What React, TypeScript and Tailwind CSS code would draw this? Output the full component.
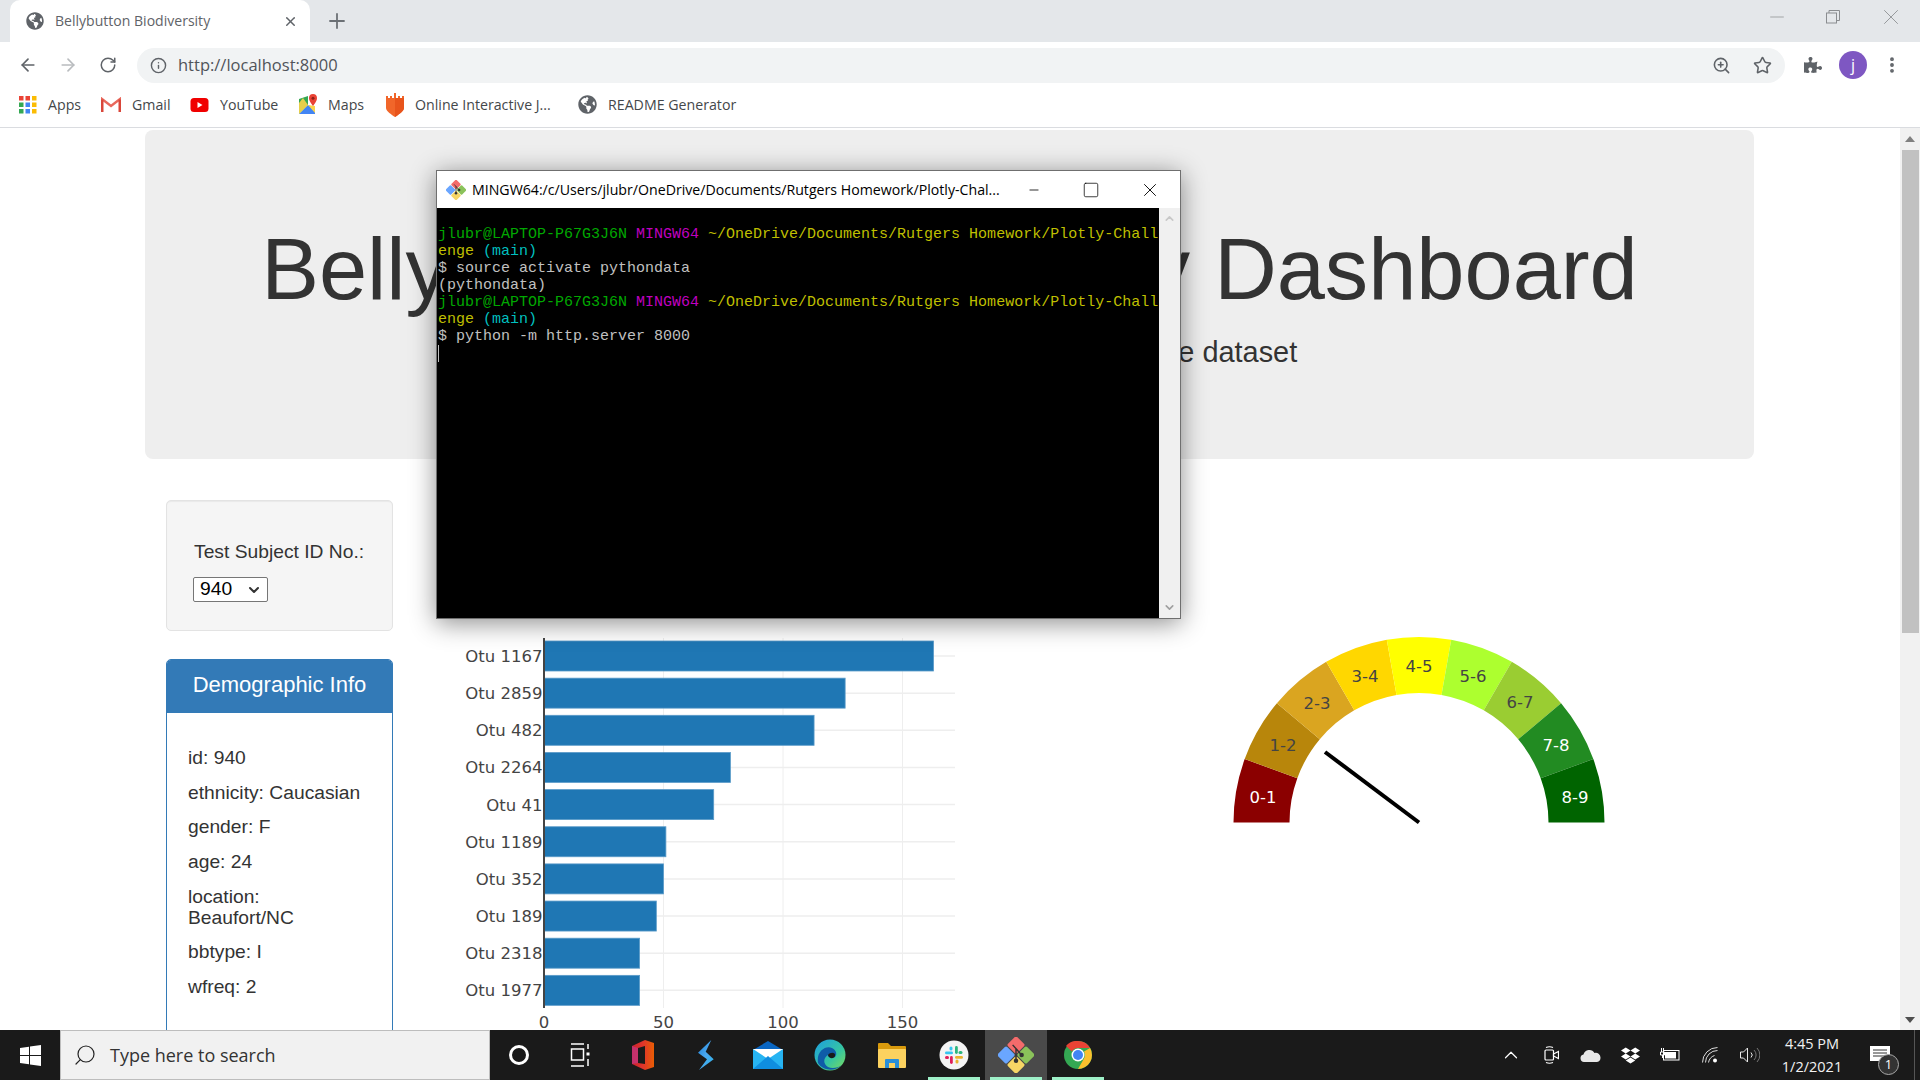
import React from "react";
import { ArrowLeft, ArrowRight, RotateCw, Info, ZoomIn, Star, EllipsisVertical, Plus, X, Search, Minus, Square, ChevronUp, ChevronDown } from "lucide-react";
import { FaGlobeAmericas, FaPuzzlePiece, FaDropbox } from "react-icons/fa";

const bars: [string, number][] = [
  ["Otu 1167", 163], ["Otu 2859", 126], ["Otu 482", 113], ["Otu 2264", 78], ["Otu 41", 71],
  ["Otu 1189", 51], ["Otu 352", 50], ["Otu 189", 47], ["Otu 2318", 40], ["Otu 1977", 40],
];

function BarChart() {
  const x0 = 104;
  const u = 2.39;
  const p = 37.15;
  return (
    <svg width="540" height="416" className="block shrink-0" style={{ fontFamily: "'DejaVu Sans', sans-serif" }}>
      {[50, 100, 150].map((t) => (
        <line key={t} x1={x0 + t * u} x2={x0 + t * u} y1="18" y2="388" stroke="#eeeeee" strokeWidth="1" />
      ))}
      {bars.map(([n, v], i) => (
        <g key={n}>
          <line x1={x0} x2="515" y1={36 + i * p} y2={36 + i * p} stroke="#eeeeee" strokeWidth="1.5" />
          <rect x={x0} y={21 + i * p} width={v * u} height="30" fill="#1f77b4" stroke="#5b9bc9" strokeWidth="0.8" />
          <text x="102.5" y={42 + i * p} textAnchor="end" fontSize="16.5" fill="#444444">{n}</text>
        </g>
      ))}
      <line x1={x0} x2={x0} y1="18" y2="388" stroke="#444444" strokeWidth="2" />
      {[0, 50, 100, 150].map((t) => (
        <text key={t} x={x0 + t * u} y="408" textAnchor="middle" fontSize="16.5" fill="#444444">{t}</text>
      ))}
    </svg>
  );
}

const gaugeColors = ["#8b0000", "#b8860b", "#daa520", "#ffd700", "#ffff00", "#adff2f", "#9acd32", "#228b22", "#006400"];
const gaugeLabels: [string, number, number, string][] = [
  ["0-1", 43, 177, "#fff"], ["1-2", 63, 125, "#444"], ["2-3", 97, 83, "#444"], ["3-4", 145, 56, "#444"], ["4-5", 199, 46, "#444"],
  ["5-6", 253, 56, "#444"], ["6-7", 300, 82, "#444"], ["7-8", 336, 125, "#fff"], ["8-9", 355, 177, "#fff"],
];

function Gauge() {
  const cx = 199, cy = 202.5, R = 185.5, r = 129.5;
  const pt = (rad: number, a: number) => `${cx - rad * Math.cos(a)} ${cy - rad * Math.sin(a)}`;
  return (
    <svg width="400" height="220" className="block shrink-0" style={{ fontFamily: "'DejaVu Sans', sans-serif" }}>
      {gaugeColors.map((c, i) => {
        const a = (i * Math.PI) / 9, b = ((i + 1) * Math.PI) / 9;
        return <path key={c} fill={c} d={`M${pt(r, a)} L${pt(R, a)} A${R} ${R} 0 0 1 ${pt(R, b)} L${pt(r, b)} A${r} ${r} 0 0 0 ${pt(r, a)} Z`} />;
      })}
      {gaugeLabels.map(([t, x, y, c]) => (
        <text key={t} x={x} y={y + 6} textAnchor="middle" fontSize="16.5" fill={c}>{t}</text>
      ))}
      <line x1="199" y1="202.500" x2="105" y2="132" stroke="#000" strokeWidth="4" />
    </svg>
  );
}

function AppsIcon() {
  const c = ["#ea4335", "#ea4335", "#fbbc04", "#34a853", "#4285f4", "#fbbc04", "#34a853", "#4285f4", "#fbbc04"];
  return (
    <svg width="18" height="18" viewBox="0 0 18 18">
      {c.map((f, i) => <rect key={i} x={(i % 3) * 6.5} y={Math.floor(i / 3) * 6.5} width="4.5" height="4.5" fill={f} />)}
    </svg>
  );
}
function GmailIcon() {
  return (
    <svg width="20" height="16" viewBox="0 0 20 16">
      <path d="M1 15V2l9 7 9-7v13" fill="none" stroke="#e8685c" strokeWidth="2.4" />
      <path d="M1.2 15V2.5M18.8 15V2.5" stroke="#d9463a" strokeWidth="2.4" />
    </svg>
  );
}
function YoutubeIcon() {
  return (
    <svg width="19" height="18" viewBox="0 0 19 18">
      <rect x="0.5" y="2" width="18" height="14" rx="3.5" fill="#f00000" />
      <path d="M7.5 6l5 3-5 3z" fill="#fff" />
    </svg>
  );
}
function MapsIcon() {
  return (
    <svg width="18" height="22" viewBox="0 0 18 22">
      <path d="M0 5l9-3 0 9-9 9z" fill="#34a853" />
      <path d="M0 20l9-9 7 9z" fill="#4285f4" />
      <path d="M2 20l8-9 6 7 0 2z" fill="#4285f4" />
      <path d="M4 4l5 7-9 9V9z" fill="#fbd34a" opacity=".9" />
      <path d="M9 11l7 8v-7z" fill="#fbd34a" />
      <path d="M14 0a4.2 4.2 0 0 1 4 4.3c0 3-4 7.7-4 7.7s-4-4.700-4-7.700A4.200 4.200 0 0 1 14 0z" fill="#ea4335" />
      <circle cx="14" cy="4.300" r="1.500" fill="#8f1f17" />
    </svg>
  );
}
function JsIcon() {
  return (
    <svg width="18" height="24" viewBox="0 0 18 24">
      <path d="M0 3h2v2h2V3h2v2h2V0h2v5h2V3h2v2h2V3h2v12c0 3-6 7-9 9-3-2-9-6-9-9z" fill="#f1662a" />
      <path d="M9 5h9v10c0 3-6 7-9 9z" fill="#e8541c" />
    </svg>
  );
}
function Globe({ size = 19 }: { size?: number }) {
  return <FaGlobeAmericas size={size} color="#5f6368" />;
}
function GitIcon({ size = 18 }: { size?: number }) {
  return (
    <svg width={size} height={size} viewBox="0 0 32 32">
      <g transform="rotate(45 16 16)">
        <rect x="4" y="4" width="11.500" height="11.500" rx="1.500" fill="#f46b6b" />
        <rect x="16.500" y="4" width="11.500" height="11.500" rx="1.500" fill="#8ac25a" />
        <rect x="4" y="16.500" width="11.500" height="11.500" rx="1.500" fill="#6aa6ff" />
        <rect x="16.500" y="16.500" width="11.500" height="11.500" rx="1.500" fill="#f7d665" />
      </g>
      <circle cx="16" cy="21" r="2" fill="#333" />
      <circle cx="21" cy="16" r="2" fill="#333" />
      <path d="M16 10v11M13 7l8 9" stroke="#333" strokeWidth="1.300" />
    </svg>
  );
}

const bookmarks: [React.ReactNode, string, string, string][] = [
  [<AppsIcon />, "Apps", "ml-[11px]", "w-[33px]"],
  [<GmailIcon />, "Gmail", "ml-[20px]", "w-[37px]"],
  [<YoutubeIcon />, "YouTube", "ml-[21px]", "w-[57px]"],
  [<MapsIcon />, "Maps", "ml-[22px]", "w-[36px]"],
  [<JsIcon />, "Online Interactive J...", "ml-[22px]", "w-[138px]"],
  [<Globe />, "README Generator", "ml-[25px]", "w-[128px]"],
];

function ChromeBar() {
  return (
    <div className="shrink-0 [font-family:'Open_Sans',sans-serif] bg-white">
      <div className="h-[42px] bg-[#e4e7ea] flex items-center relative">
        <div className="ml-[10px] w-[300px] h-[42px] bg-white rounded-t-[10px] flex items-center pl-[16px] pr-[12px]">
          <Globe size={18} />
          <span className="ml-[11px] text-[14.05px] text-[#5f6368] flex-1 whitespace-nowrap">Bellybutton Biodiversity</span>
          <X size={15} strokeWidth={2.4} color="#5f6368" />
        </div>
        <Plus size={24} strokeWidth={1.8} color="#6b7075" className="ml-[15px]" />
        <div className="ml-auto flex items-center h-full text-[#8a8d90]">
          <Minus size={22} strokeWidth={0.8} className="mr-[38px] -translate-y-[4px]" />
          <svg width="14" height="14" viewBox="0 0 14 14" fill="none" stroke="#8a8d90" className="mr-[38px] -translate-y-[4px]">
            <rect x="0.5" y="3" width="10" height="10" />
            <path d="M3 3V0.500h10.500v10H10.500" />
          </svg>
          <X size={26} strokeWidth={0.8} className="mr-[16px] -translate-y-[4px]" />
        </div>
      </div>
      <div className="h-[41px] flex items-center pt-[5px]">
        <ArrowLeft size={20} color="#5f6368" className="ml-[18px]" />
        <ArrowRight size={20} color="#b9bcbf" className="ml-[20px]" />
        <RotateCw size={18} color="#5f6368" className="ml-[21px]" />
        <div className="ml-[20px] w-[1648px] h-[35px] bg-[#f1f3f4] rounded-full flex items-center pl-[13px] pr-[13px]">
          <Info size={17} color="#5f6368" />
          <span className="ml-[11px] text-[16.5px] text-[#50545a] flex-1">http://localhost:8000</span>
          <ZoomIn size={19} color="#5f6368" className="mr-[22px]" />
          <Star size={19} color="#5f6368" />
        </div>
        <FaPuzzlePiece size={18} color="#5f6368" className="ml-[19px]" />
        <div className="ml-[17px] w-[28px] h-[28px] rounded-full bg-[#7e57c2] text-white text-[16px] flex items-center justify-center">j</div>
        <EllipsisVertical size={20} strokeWidth={2.6} color="#5f6368" className="ml-[15px]" />
      </div>
      <div className="h-[44px] flex items-center pl-[8px] border-b border-[#dadce0] text-[14.2px] text-[#44474a] box-content">
        {bookmarks.map(([icon, label, ml, w]) => (
          <div key={label} className={`flex items-center ${ml}`}>
            {icon}
            <span className={`ml-[11px] whitespace-nowrap ${w}`}>{label}</span>
          </div>
        ))}
      </div>
    </div>
  );
}

function Terminal() {
  const prompt = (
    <>
      <span className="text-[#00a800]">jlubr@LAPTOP-P67G3J6N</span>{" "}
      <span className="text-[#bf00bf]">MINGW64</span>{" "}
      <span className="text-[#bfbf00]">~/OneDrive/Documents/Rutgers Homework/Plotly-Chall</span>
      {"\n"}
      <span className="text-[#bfbf00]">enge</span>{" "}
      <span className="text-[#00bfbf]">(main)</span>
      {"\n"}
    </>
  );
  return (
    <div className="absolute left-[436px] top-[42px] w-[745px] h-[449px] bg-white border border-[#6f6f6f] shadow-[0_4px_24px_rgba(0,0,0,0.45)] flex flex-col">
      <div className="h-[37px] shrink-0 flex items-center [font-family:'Open_Sans',sans-serif] text-[14.17px] text-black">
        <div className="ml-[9px]"><GitIcon size={20} /></div>
        <span className="ml-[6px] w-[530px] whitespace-nowrap">MINGW64:/c/Users/jlubr/OneDrive/Documents/Rutgers Homework/Plotly-Chal...</span>
        <Minus size={14} strokeWidth={1.4} className="ml-[25px]" />
        <Square size={18} strokeWidth={1} className="ml-[41px]" />
        <X size={22} strokeWidth={1} className="ml-[39px]" />
      </div>
      <div className="flex-1 flex min-h-0">
        <pre className="w-[722px] bg-black pt-[18px] pl-[1px] [font-family:'Liberation_Mono',monospace] text-[15px] leading-[17px] text-[#c0c0c0] overflow-hidden">
          {prompt}
          {"$ source activate pythondata\n(pythondata)\n"}
          {prompt}
          {"$ python -m http.server 8000\n"}
          <span className="inline-block w-[1px] h-[17px] bg-[#c0c0c0]" />
        </pre>
        <div className="flex-1 bg-[#f0f0f0] flex flex-col items-center justify-between py-[4px]">
          <ChevronUp size={13} color="#c8c8c8" strokeWidth={3} />
          <ChevronDown size={13} color="#a0a0a0" strokeWidth={3} />
        </div>
      </div>
    </div>
  );
}

function Page() {
  const demo = ["id: 940", "ethnicity: Caucasian", "gender: F", "age: 24", "location: Beaufort/NC", "bbtype: I", "wfreq: 2"];
  return (
    <div className="flex-1 min-h-0 flex bg-white relative">
      <div className="flex-1 overflow-hidden [font-family:'Liberation_Sans',sans-serif] text-[#333333]">
        <div className="ml-[145px] w-[1609px] mt-[2px] h-[329px] bg-[#eeeeee] rounded-[8px] flex flex-col items-center pt-[93px]">
          <h1 className="text-[86.6px] leading-[92px] font-normal whitespace-nowrap">Belly Button Biodiversity Dashboard</h1>
          <p className="text-[28.9px] leading-[40px] mt-[17px]">Use the interactive charts below to explore the dataset</p>
        </div>
        <div className="flex ml-[166px] mt-[41px]">
          <div className="w-[227px] shrink-0">
            <div className="h-[131px] bg-[#f5f5f5] border border-[#e3e3e3] rounded-[5px] pl-[26px] pt-[39px] shadow-[inset_0_1px_1px_rgba(0,0,0,0.05)]">
              <div className="text-[19.25px] leading-[24px] ml-[1px]">Test Subject ID No.:</div>
              <div className="mt-[13px] w-[75px] h-[25px] bg-white border border-[#767676] rounded-[2px] flex items-center pl-[6px] text-[19.25px] text-black">
                <span className="flex-1">940</span>
                <ChevronDown size={16} strokeWidth={3} className="mr-[5px]" color="#333" />
              </div>
            </div>
            <div className="mt-[28px] h-[400px] border border-[#337ab7] rounded-[5px] bg-white">
              <div className="h-[53px] pb-[4px] bg-[#337ab7] text-white text-[22px] flex items-center justify-center rounded-t-[4px]">Demographic Info</div>
              <div className="pl-[21px] pr-[30px] pt-[34px] text-[19.25px] leading-[21px]">
                {demo.map((d) => (
                  <div key={d} className="mb-[13.7px]">{d}</div>
                ))}
              </div>
            </div>
          </div>
          <div className="ml-[47px] mt-[120px]"><BarChart /></div>
          <div className="ml-[240px] mt-[120px]"><Gauge /></div>
        </div>
      </div>
      <div className="w-[20px] shrink-0 bg-[#f1f1f1] flex flex-col items-center relative">
        <div className="h-[22px] flex items-center justify-center">
          <svg width="10" height="6" viewBox="0 0 10 6"><path d="M5 0l5 6H0z" fill="#808080" /></svg>
        </div>
        <div className="w-[17px] h-[483px] bg-[#c1c1c1]" />
        <div className="mt-auto h-[20px] flex items-center justify-center">
          <svg width="10" height="6" viewBox="0 0 10 6"><path d="M5 6l5-6H0z" fill="#505050" /></svg>
        </div>
      </div>
      <Terminal />
    </div>
  );
}

function TaskIcon({ children, w = 62, active, under }: { children: React.ReactNode; w?: number; active?: boolean; under?: boolean }) {
  return (
    <div className={`relative h-full flex items-center justify-center shrink-0 ${active ? "bg-[#4a4a4a]" : ""}`} style={{ width: w }}>
      {children}
      {under && <div className="absolute bottom-0 left-[5px] right-[5px] h-[3px] bg-[#9ef0c8]" />}
    </div>
  );
}

function Taskbar() {
  return (
    <div className="h-[50px] shrink-0 bg-[#1a1a1a] flex items-center [font-family:'Open_Sans',sans-serif] text-white">
      <div className="w-[60px] flex justify-center">
        <svg width="21" height="21" viewBox="0 0 21 21" fill="#fff">
          <path d="M0 3l9-1.300V10H0zM10 1.500L21 0v10H10zM0 11h9v8.300L0 18zM10 11h11v10l-11-1.500z" />
        </svg>
      </div>
      <div className="w-[430px] h-full bg-[#f1f1f1] border border-[#bdbdbd] flex items-center text-[#333]">
        <Search size={24} strokeWidth={1.2} color="#222" className="ml-[12px] -scale-x-100" />
        <span className="ml-[13px] text-[18px]">Type here to search</span>
      </div>
      <div className="flex items-center h-full ml-[-1px]">
        <TaskIcon w={62}>
          <div className="ml-[-2px] w-[20px] h-[20px] rounded-full border-[3px] border-white" />
        </TaskIcon>
        <TaskIcon w={62}>
          <svg width="20" height="24" viewBox="0 0 20 24" fill="none" stroke="#fff" strokeWidth="1.500" className="ml-[-4px]">
            <path d="M1 1h13M1 23h13" /><rect x="1.500" y="6" width="12" height="11" /><path d="M18 1v5M18 16v7" /><rect x="16.500" y="9.500" width="3" height="3" fill="#fff" stroke="none" />
          </svg>
        </TaskIcon>
        <TaskIcon w={62}>
          <svg width="22" height="32" viewBox="0 0 22 32" className="ml-[-2px]">
            <defs>
              <linearGradient id="off" x1="0" y1="0" x2="1" y2="0"><stop offset="0" stopColor="#c8202c" /><stop offset="0.5" stopColor="#e0352b" /><stop offset="1" stopColor="#e85d04" /></linearGradient>
            </defs>
            <path d="M0 7L13 1l9 3v24l-9 3-13-6z" fill="url(#off)" />
            <path d="M6 9l7-2v18l-7-1z" fill="#1a1a1a" />
            <path d="M0 7l6 2v15l-6 1z" fill="#c2357c" opacity=".8" />
          </svg>
        </TaskIcon>
        <TaskIcon w={62}>
          <svg width="16" height="30" viewBox="0 0 16 30">
            <defs>
              <linearGradient id="vs" x1="0" y1="0" x2="1" y2="1"><stop offset="0" stopColor="#1e7fd6" /><stop offset="0.5" stopColor="#4aa8f0" /><stop offset="1" stopColor="#2bb5e8" /></linearGradient>
            </defs>
            <path d="M13.300 0L0 12.700l9 6.600L1 30l14.700-10.700-8-7.600z" fill="url(#vs)" />
          </svg>
        </TaskIcon>
        <TaskIcon w={62}>
          <svg width="32" height="28" viewBox="0 0 32 28">
            <path d="M1 9L16 0l15 9z" fill="#0a66c2" />
            <rect x="1" y="8" width="30" height="20" fill="#27b4f2" />
            <path d="M1 8h30L16 18z" fill="#fff" />
            <path d="M1 28L16 15l15 13z" fill="#0f8ee0" />
          </svg>
        </TaskIcon>
        <TaskIcon w={62}>
          <svg width="32" height="32" viewBox="0 0 32 32">
            <defs><linearGradient id="edg" x1="0" y1="0" x2="1" y2="1"><stop offset="0" stopColor="#1b9de2" /><stop offset="0.6" stopColor="#37c6a0" /><stop offset="1" stopColor="#7fdc5a" /></linearGradient></defs>
            <circle cx="16" cy="16" r="15.500" fill="url(#edg)" />
            <path d="M4 24C2 12 12 6 18 9c5 2.500 5 7 3 9-3 2-7 1-7-2-5 3-5 9 0 12 4 2 10 1 14-2-7 7-19 6-24-2z" fill="#0f5ca8" />
            <path d="M14 16c2-3 8-3 7 1-1 3-6 3-7-1z" fill="#1a1a1a" />
          </svg>
        </TaskIcon>
        <TaskIcon w={62}>
          <svg width="28" height="26" viewBox="0 0 28 26">
            <path d="M0 2a1 1 0 0 1 1-1h9l3 3h14a1 1 0 0 1 1 1v4H0z" fill="#d99a0c" />
            <rect x="0" y="7" width="28" height="19" rx="1" fill="#fcd25f" />
            <path d="M7 26v-8a1 1 0 0 1 1-1h12a1 1 0 0 1 1 1v8h-4v-5h-6v5z" fill="#2a8fd8" />
          </svg>
        </TaskIcon>
        <TaskIcon w={62} under>
          <svg width="30" height="30" viewBox="0 0 30 30">
            <circle cx="15" cy="15" r="14.500" fill="#f4f4f4" />
            <rect x="6" y="11.500" width="8" height="2.800" rx="1.400" fill="#36c5f0" />
            <rect x="10.500" y="6.500" width="3" height="4" rx="1.500" fill="#36c5f0" />
            <rect x="16" y="6" width="2.800" height="8" rx="1.400" fill="#2eb67d" />
            <rect x="19.500" y="11" width="4" height="3" rx="1.500" fill="#2eb67d" />
            <rect x="16" y="16" width="8" height="2.800" rx="1.400" fill="#ecb22e" />
            <rect x="16.500" y="19.500" width="3" height="4" rx="1.500" fill="#ecb22e" />
            <rect x="11" y="16" width="2.800" height="8" rx="1.400" fill="#e01e5a" />
            <rect x="6" y="16" width="4" height="3" rx="1.500" fill="#e01e5a" />
          </svg>
        </TaskIcon>
        <TaskIcon w={62} active under><GitIcon size={36} /></TaskIcon>
        <TaskIcon w={62} under>
          <svg width="28" height="28" viewBox="0 0 28 28">
            <circle cx="14" cy="14" r="14" fill="#34a853" />
            <path d="M14 0a14 14 0 0 1 12.100 7H14a7 7 0 0 0-6.100 3.500L2 4.900A14 14 0 0 1 14 0z" fill="#ea4335" />
            <path d="M26.100 7A14 14 0 0 1 14 28l6-10.500A7 7 0 0 0 20 10.500z" fill="#fbc02d" />
            <circle cx="14" cy="14" r="6.500" fill="#fff" />
            <circle cx="14" cy="14" r="5" fill="#4285f4" />
          </svg>
        </TaskIcon>
      </div>
      <div className="ml-auto flex items-center h-full">
        <ChevronUp size={22} strokeWidth={1.300} className="mr-[22px]" />
        <svg width="15" height="20" viewBox="0 0 15 20" fill="none" stroke="#fff" strokeWidth="1.200" className="mr-[21px]">
          <rect x="1" y="5" width="8.500" height="10" rx="1" />
          <path d="M9.500 9l5-2.500v7l-5-2.500zM2 2.500q3.500-1.500 7 0M2 17.500q3.500 1.500 7 0" />
        </svg>
        <svg width="21" height="13" viewBox="0 0 21 13" fill="#e8e8e8" className="mr-[20px]">
          <path d="M4 13a3.800 3.800 0 0 1-.5-7.500A6 6 0 0 1 14.500 4a4.700 4.700 0 0 1 6 4.500A4.400 4.400 0 0 1 17 13z" />
        </svg>
        <FaDropbox size={19} className="mr-[20px]" />
        <svg width="20" height="14" viewBox="0 0 20 14" fill="none" stroke="#fff" className="mr-[22px]">
          <rect x="3.500" y="2.500" width="15.500" height="9.500" />
          <rect x="5" y="4" width="11" height="6.500" fill="#fff" stroke="none" />
          <path d="M1.500 0v4M3.500 0v4M0.500 4h4v3h-4zM2.500 7v3" />
        </svg>
        <svg width="16" height="16" viewBox="0 0 16 16" fill="none" stroke="#ddd" strokeWidth="1" className="mr-[22px]">
          <path d="M0.500 15.500a15 15 0 0 1 15-15M3.500 15.500a12 12 0 0 1 12-12M6.500 15.500a9 9 0 0 1 6-7" />
          <circle cx="13" cy="13.500" r="2" fill="#fff" stroke="none" />
        </svg>
        <svg width="20" height="16" viewBox="0 0 20 16" fill="none" stroke="#e8e8e8" strokeWidth="1" className="mr-[16px]">
          <path d="M0.500 5h3l4-4v14l-4-4h-3zM11 5.500a3.500 3.500 0 0 1 0 5" />
          <path d="M14 3a7 7 0 0 1 0 10M17 1a10 10 0 0 1 0 14" stroke="#777" />
        </svg>
        <div className="w-[72px] text-center text-[14.5px] leading-[23px] text-[#f2f2f2] whitespace-nowrap">
          <div>4:45 PM</div>
          <div>1/2/2021</div>
        </div>
        <div className="relative w-[64px] h-full flex items-center justify-center">
          <svg width="20" height="17" viewBox="0 0 20 17" className="-translate-y-[1px]">
            <path d="M0 0h20v15H0z" fill="#fff" />
            <path d="M3 4h14M3 7h14M3 10h14" stroke="#333" strokeWidth="1" />
          </svg>
          <div className="absolute left-[30px] top-[24px] w-[21px] h-[21px] rounded-full bg-[#333] border border-[#aaa] text-[13px] leading-[19px] text-center">1</div>
        </div>
        <div className="ml-[2px] mr-[5px] w-px h-full bg-[#555]" />
      </div>
    </div>
  );
}

export default function App() {
  return (
    <div className="w-[1920px] h-[1080px] flex flex-col overflow-hidden">
      <ChromeBar />
      <Page />
      <Taskbar />
    </div>
  );
}
